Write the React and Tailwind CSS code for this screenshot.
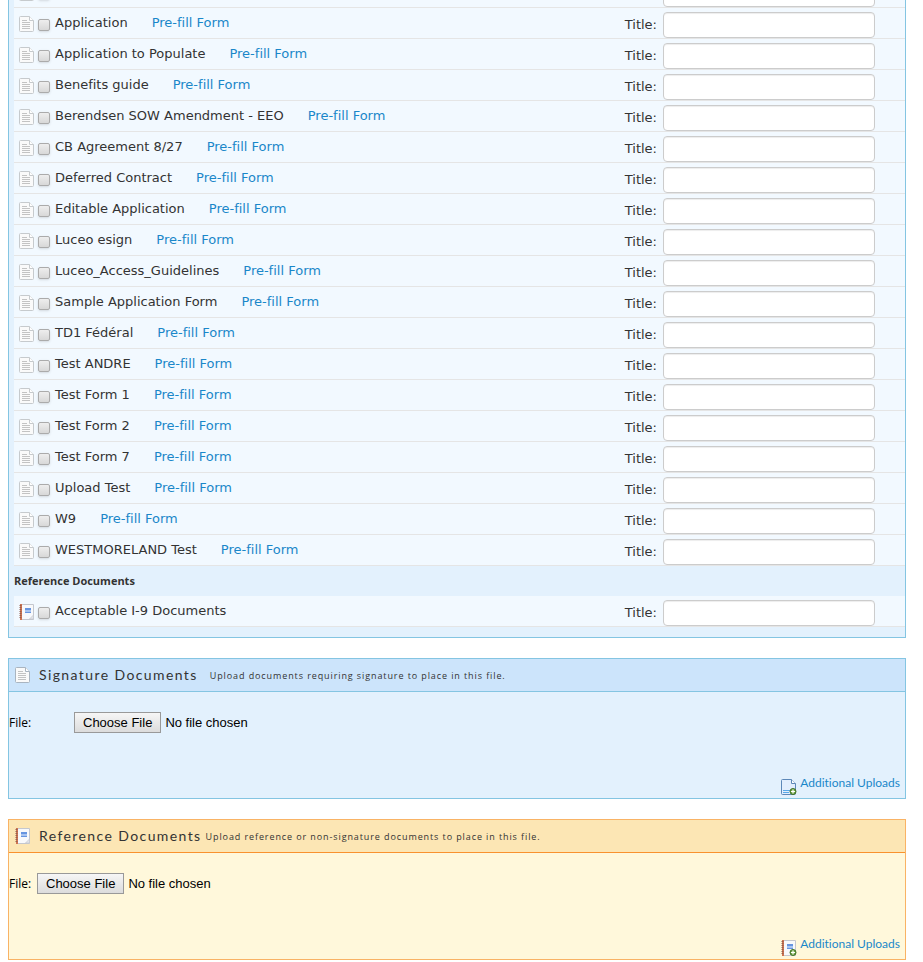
import React from "react";

const forms = [
  "Application",
  "Application to Populate",
  "Benefits guide",
  "Berendsen SOW Amendment - EEO",
  "CB Agreement 8/27",
  "Deferred Contract",
  "Editable Application",
  "Luceo esign",
  "Luceo_Access_Guidelines",
  "Sample Application Form",
  "TD1 Fédéral",
  "Test ANDRE",
  "Test Form 1",
  "Test Form 2",
  "Test Form 7",
  "Upload Test",
  "W9",
  "WESTMORELAND Test",
];

function PageIcon({ stroke = "#c6cacd", add = false }) {
  return (
    <svg width="16" height="16" viewBox="0 0 16 16" className="shrink-0" aria-hidden="true">
      <path d="M.5 1.500q0-1 1-1h9l4 4v10q0 1-1 1h-12q-1 0-1-1z" fill={add ? "#e2eefd" : "#fafafa"} stroke={stroke} />
      <path d="M10.500.5v4h4" fill="#fff" stroke={stroke} />
      {add ? (
        <>
          <path d="M2 11.500h7M2 13.500h6" stroke="#58a9e8" />
          <AddBadge />
        </>
      ) : (
        <path d="M3 4.500h5M3 6.500h8M3 8.500h8M3 10.500h8M3 12.500h8" stroke="#c3c3c3" />
      )}
    </svg>
  );
}

function AddBadge() {
  return (
    <>
      <circle cx="12" cy="12.500" r="3" fill="#6fa544" stroke="#3f7226" />
      <path d="M12 10.500v4M10 12.500h4" stroke="#fff" strokeWidth="1.2" />
    </>
  );
}

function NotebookIcon({ add = false }) {
  return (
    <svg width="16" height="16" viewBox="0 0 16 16" className="shrink-0" aria-hidden="true">
      <path d="M2.500.5h12v15h-12z" fill="#f8f9fb" stroke="#c4c7ce" />
      <path d="M10.500 15l4-4v4z" fill="#e3e5ea" stroke="#c4c7ce" strokeWidth=".7" />
      <path d="M1 0h2v16h-2z" fill="#cf7350" />
      <path d="M.5 1.500h2M.5 3.500h2M.5 5.500h2M.5 7.500h2M.5 9.500h2M.5 11.500h2M.5 13.500h2" stroke="#95604e" />
      <path d="M6 4h6v2H6zM6 8h6v1H6z" fill="#6695e0" />
      <path d="M6 6h6v2H6z" fill="#a9c5f0" />
      {add && <AddBadge />}
    </svg>
  );
}

const checkboxStyle =
  "ml-[3px] mt-[11px] size-3 shrink-0 appearance-none rounded-xs border border-[#ababab] bg-linear-to-b from-[#eee] to-[#d8d8d8] shadow-sm checked:bg-[#1a82c4]";
const titleStyle =
  "mt-1 h-[26px] w-[212px] rounded-sm border border-[#ccc] bg-white px-1.5 shadow-[inset_0_1px_1px_rgba(0,0,0,0.075)] outline-none focus:border-[#66afe9]";
const rowStyle =
  "flex h-[31px] shrink-0 items-start border-b border-[#e5e5e5] bg-[#f2f9ff] pl-[5px] pr-[30px] text-[13px] leading-5 text-[#333]";

function DocumentRow({ id, name, prefill = true, icon = <PageIcon /> }) {
  return (
    <li className={rowStyle}>
      <span className="flex grow items-start">
        <span className="mt-2">{icon}</span>
        <input id={`${id}-check`} type="checkbox" className={checkboxStyle} />
        <label htmlFor={`${id}-check`} className="ml-[5px] mt-[5px]">
          {name}
        </label>
        {prefill && (
          <a href="#prefill" className="ml-6 mt-[5px] text-[#1a87c9]">
            Pre-fill Form
          </a>
        )}
      </span>
      <label htmlFor={`${id}-title`} className="mr-1.5 mt-[7px]">
        Title:
      </label>
      <input id={`${id}-title`} type="text" className={titleStyle} />
    </li>
  );
}

function ScrolledRow() {
  return (
    <li className="flex h-2 flex-col justify-end overflow-hidden">
      <div className={rowStyle}>
        <span className="flex grow items-start">
          <span className="mt-2">
            <PageIcon />
          </span>
          <input type="checkbox" aria-label="Select document" className={checkboxStyle} />
        </span>
        <input type="text" aria-label="Title" className={titleStyle} />
      </div>
    </li>
  );
}

const themes = {
  blue: {
    section: "border-[#84c5e2] bg-[#e3f1fd]",
    header: "border-[#84c5e2] bg-[#cce4fb]",
  },
  orange: {
    section: "border-[#f9b365] bg-[#fff8db]",
    header: "border-[#f9922e] bg-[#fce6b4]",
  },
};

function UploadSection({ id, theme, icon, addIcon, title, hint, hintGap, labelWidth }) {
  const colors = themes[theme];
  return (
    <section className={`flex h-[141px] flex-col border font-[Lato,sans-serif] ${colors.section}`}>
      <header className={`flex h-[33px] shrink-0 items-center border-b pl-1.5 text-[#333] ${colors.header}`}>
        {icon}
        <h2 className="ml-2 text-[14px] leading-5 tracking-widest">{title}</h2>
        <p className={`pt-0.5 font-['Open_Sans',sans-serif] text-[9px] leading-5 tracking-widest ${hintGap}`}>{hint}</p>
      </header>
      <div className="flex grow items-start pt-5 text-black">
        <label htmlFor={id} className={`font-['Open_Sans',sans-serif] text-[12px] leading-[21px] ${labelWidth}`}>
          File:
        </label>
        <input
          id={id}
          type="file"
          className="h-[21px] font-['Liberation_Sans',Arial,sans-serif] text-[13px] leading-[19px] file:mr-1 file:h-[21px] file:border file:border-solid file:border-[#999] file:bg-linear-to-b file:from-[#f6f6f6] file:to-[#dcdcdc] file:px-2 file:text-black"
        />
      </div>
      <a href="#more" className="mb-[3px] mr-[5px] flex items-start gap-[3px] self-end text-[12px] leading-4 text-[#1a87c9]">
        <span className="mt-1">{addIcon}</span>
        Additional Uploads
      </a>
    </section>
  );
}

export default function App() {
  return (
    <main className="ml-2 mr-[17px] flex flex-col gap-5 pb-0.5 font-['DejaVu_Sans',Verdana,sans-serif] [font-variant-ligatures:none]">
      <section className="border-x border-b border-[#84c5e2] bg-[#e3f1fd] pb-2.5 pl-[5px]">
        <ul>
          <ScrolledRow />
          {forms.map((name, i) => (
            <DocumentRow key={name} id={`form-${i}`} name={name} />
          ))}
        </ul>
        <h3 className="h-[30px] font-['Open_Sans',sans-serif] text-[11px] font-bold leading-[30px] text-[#333]">
          Reference Documents
        </h3>
        <ul>
          <DocumentRow id="reference-0" name="Acceptable I-9 Documents" prefill={false} icon={<NotebookIcon />} />
        </ul>
      </section>

      <UploadSection
        id="signature-file"
        theme="blue"
        icon={<PageIcon stroke="#a9b4c0" />}
        addIcon={<PageIcon stroke="#5d88b8" add />}
        title="Signature Documents"
        hint="Upload documents requiring signature to place in this file."
        hintGap="ml-3"
        labelWidth="w-[65px]"
      />
      <UploadSection
        id="reference-file"
        theme="orange"
        icon={<NotebookIcon />}
        addIcon={<NotebookIcon add />}
        title="Reference Documents"
        hint="Upload reference or non-signature documents to place in this file."
        hintGap="ml-1"
        labelWidth="w-7"
      />
    </main>
  );
}
